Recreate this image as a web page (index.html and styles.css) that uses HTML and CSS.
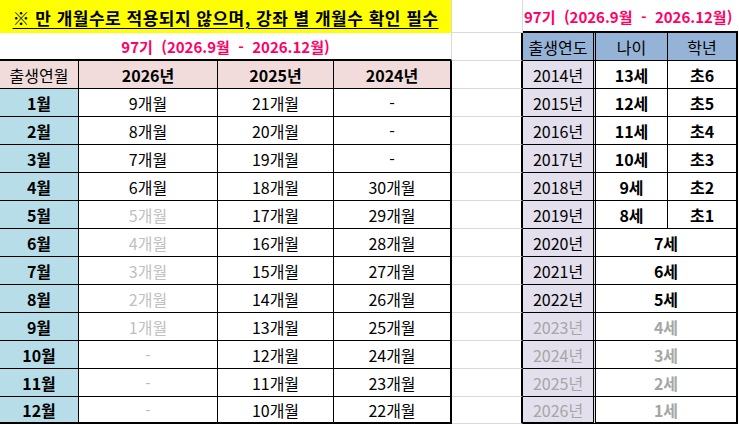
FILE: index.html
```html
<!DOCTYPE html>
<html lang="ko">
<head>
<meta charset="utf-8">
<title>개월수 표</title>
<link rel="stylesheet" href="styles.css">
</head>
<body>
<div class="sheet">
  <!-- row 1 -->
  <div class="c banner"><span>※ 만 개월수로 적용되지 않으며, 강좌 별 개월수 확인 필수</span></div>
  <div class="c g"></div>
  <div class="c rtitle">97기  (2026.9월  -  2026.12월)</div>
  <!-- row 2 -->
  <div class="c ltitle">97기  (2026.9월  -  2026.12월)</div>
  <div class="c g edge"></div>
  <div class="c t rh dbl">출생연도</div>
  <div class="c t rh">나이</div>
  <div class="c t rh rb2">학년</div>
  <!-- row 3 -->
  <div class="c t lh">출생연월</div>
  <div class="c t lh b">2026년</div>
  <div class="c t lh b">2025년</div>
  <div class="c t lh b rb2">2024년</div>
  <div class="c g edge"></div>
  <div class="c t yr dbl">2014년</div>
  <div class="c t b">13세</div>
  <div class="c t b rb2">초6</div>
  <!-- row 4 -->
  <div class="c t mo">1월</div>
  <div class="c t">9개월</div>
  <div class="c t">21개월</div>
  <div class="c t rb2">-</div>
  <div class="c g edge"></div>
  <div class="c t yr dbl">2015년</div>
  <div class="c t b">12세</div>
  <div class="c t b rb2">초5</div>
  <!-- row 5 -->
  <div class="c t mo">2월</div>
  <div class="c t">8개월</div>
  <div class="c t">20개월</div>
  <div class="c t rb2">-</div>
  <div class="c g edge"></div>
  <div class="c t yr dbl">2016년</div>
  <div class="c t b">11세</div>
  <div class="c t b rb2">초4</div>
  <!-- row 6 -->
  <div class="c t mo">3월</div>
  <div class="c t">7개월</div>
  <div class="c t">19개월</div>
  <div class="c t rb2">-</div>
  <div class="c g edge"></div>
  <div class="c t yr dbl">2017년</div>
  <div class="c t b">10세</div>
  <div class="c t b rb2">초3</div>
  <!-- row 7 -->
  <div class="c t mo">4월</div>
  <div class="c t">6개월</div>
  <div class="c t">18개월</div>
  <div class="c t rb2">30개월</div>
  <div class="c g edge"></div>
  <div class="c t yr dbl">2018년</div>
  <div class="c t b">9세</div>
  <div class="c t b rb2">초2</div>
  <!-- row 8 -->
  <div class="c t mo">5월</div>
  <div class="c t dim">5개월</div>
  <div class="c t">17개월</div>
  <div class="c t rb2">29개월</div>
  <div class="c g edge"></div>
  <div class="c t yr dbl">2019년</div>
  <div class="c t b">8세</div>
  <div class="c t b rb2">초1</div>
  <!-- row 9 -->
  <div class="c t mo">6월</div>
  <div class="c t dim">4개월</div>
  <div class="c t">16개월</div>
  <div class="c t rb2">28개월</div>
  <div class="c g edge"></div>
  <div class="c t yr dbl">2020년</div>
  <div class="c t b rb2 age">7세</div>
  <!-- row 10 -->
  <div class="c t mo">7월</div>
  <div class="c t dim">3개월</div>
  <div class="c t">15개월</div>
  <div class="c t rb2">27개월</div>
  <div class="c g edge"></div>
  <div class="c t yr dbl">2021년</div>
  <div class="c t b rb2 age">6세</div>
  <!-- row 11 -->
  <div class="c t mo">8월</div>
  <div class="c t dim">2개월</div>
  <div class="c t">14개월</div>
  <div class="c t rb2">26개월</div>
  <div class="c g edge"></div>
  <div class="c t yr dbl">2022년</div>
  <div class="c t b rb2 age">5세</div>
  <!-- row 12 -->
  <div class="c t mo">9월</div>
  <div class="c t dim">1개월</div>
  <div class="c t">13개월</div>
  <div class="c t rb2">25개월</div>
  <div class="c g edge"></div>
  <div class="c t yr dbl old">2023년</div>
  <div class="c t b rb2 age old">4세</div>
  <!-- row 13 -->
  <div class="c t mo">10월</div>
  <div class="c t dim">-</div>
  <div class="c t">12개월</div>
  <div class="c t rb2">24개월</div>
  <div class="c g edge"></div>
  <div class="c t yr dbl old">2024년</div>
  <div class="c t b rb2 age old">3세</div>
  <!-- row 14 -->
  <div class="c t mo">11월</div>
  <div class="c t dim">-</div>
  <div class="c t">11개월</div>
  <div class="c t rb2">23개월</div>
  <div class="c g edge"></div>
  <div class="c t yr dbl old">2025년</div>
  <div class="c t b rb2 age old">2세</div>
  <!-- row 15 -->
  <div class="c t mo bb2">12월</div>
  <div class="c t dim bb2">-</div>
  <div class="c t bb2">10개월</div>
  <div class="c t rb2 bb2">22개월</div>
  <div class="c g edge"></div>
  <div class="c t yr dbl old bb2">2026년</div>
  <div class="c t b rb2 age old bb2">1세</div>
</div>
</body>
</html>
```

FILE: styles.css
```css
html, body {
  margin: 0;
  padding: 0;
  background: #ffffff;
}

body {
  font-family: "Noto Sans CJK KR", "Noto Sans", sans-serif;
  color: #000000;
}

.sheet {
  display: grid;
  grid-template-columns: 79px 139px 116px 118px 71px 73px 72px 70px;
  grid-template-rows: 33px 28px repeat(12, 28px) 27px;
  width: 738px;
}

.c {
  box-sizing: border-box;
  display: flex;
  align-items: center;
  justify-content: center;
  font-size: 16px;
  line-height: 1;
  white-space: pre;
  overflow: hidden;
}

/* empty spreadsheet cells with default gridlines */
.g {
  border-right: 1px solid #dadada;
  border-bottom: 1px solid #dadada;
}

.g.edge {
  border-right: 2px solid #000000;
}

/* bordered table cells */
.t {
  border-right: 1px solid #000000;
  border-bottom: 1px solid #000000;
}

.rb2 {
  border-right-width: 2px;
}

.bb2 {
  border-bottom-width: 2px;
}

.dbl {
  border-right: 3px double #000000;
}

.b {
  font-weight: 700;
}

/* top notice */
.banner {
  grid-column: span 4;
  background: #ffff00;
  border-right: 1px solid #dadada;
  font-size: 17px;
  letter-spacing: 0.5px;
  font-weight: 700;
  padding-top: 2px;
}

.banner span {
  text-decoration: underline;
  text-underline-offset: 3px;
}

.ltitle {
  grid-column: span 4;
  color: #ff0066;
  font-size: 15px;
  font-weight: 700;
  border-right: 1px solid #dadada;
  border-bottom: 2px solid #000000;
}

.rtitle {
  grid-column: span 3;
  justify-content: flex-start;
  padding-left: 1px;
  color: #ff0066;
  font-size: 15px;
  font-weight: 700;
  border-bottom: 2px solid #000000;
  padding-top: 1px;
}

/* left table */
.lh {
  background: #f2dcdb;
}

.mo {
  background: #b7dee8;
  font-weight: 700;
}

.dim {
  color: #bfbfbf;
}

/* right table */
.rh {
  background: #95b3d7;
}

.yr {
  background: #e4dfec;
}

.age {
  grid-column: span 2;
}

.old {
  color: #a6a6a6;
}
```
